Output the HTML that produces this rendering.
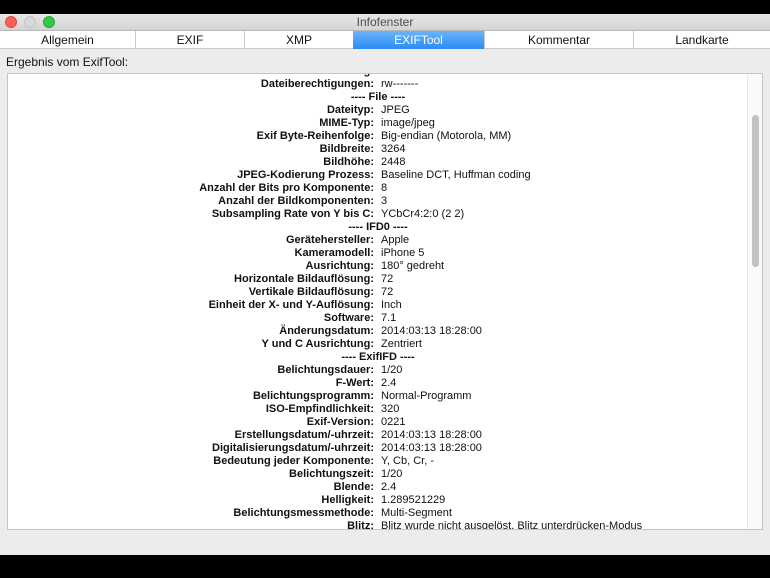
<!DOCTYPE html>
<html><head><meta charset="utf-8"><style>
*{margin:0;padding:0;box-sizing:border-box}
body{width:770px;height:578px;background:#000;font-family:"Liberation Sans",Arial,sans-serif;position:relative;overflow:hidden}
.win{position:absolute;left:0;top:14px;width:770px;height:541px;background:#ececec}
.title{position:absolute;left:0;top:0;width:770px;height:17px;background:linear-gradient(#e8e8e8,#d3d3d3);border-bottom:1px solid #b8b8b8;text-align:center;font-size:12px;line-height:17px;color:#4d4d4d}
.dot{position:absolute;top:2px;width:12px;height:12px;border-radius:50%}
.tabs{position:absolute;top:17px;left:0;width:770px;height:18px;background:#fff;border-bottom:1px solid #c8c8c8}
.tab{position:absolute;top:0;height:18px;font-size:12px;line-height:18px;text-align:center;color:#111;border-left:1px solid #c8c8c8}
.tab.sel{background:linear-gradient(#6cb3fa,#2a8cf5);color:#fff;border-left:none}
.lbl{position:absolute;left:6px;top:41px;font-size:12px;color:#111}
.box{position:absolute;left:7px;top:59px;width:756px;height:457px;background:#fff;border:1px solid #c4c4c4;overflow:hidden}
.sb{position:absolute;right:0;top:0;width:15px;height:100%;background:#fafafa;border-left:1px solid #e6e6e6}
.thumb{position:absolute;left:4px;top:41px;width:7px;height:152px;border-radius:4px;background:#c2c2c2}
.row{position:absolute;left:0;height:13px;font-size:11px;line-height:13px;color:#111;white-space:nowrap}
.k{position:absolute;font-weight:bold;text-align:right}
.v{position:absolute;left:373px}
.h{position:absolute;left:0;width:740px;text-align:center;font-weight:bold;font-size:11px;line-height:13px;color:#111}
</style></head><body>
<div class="win">
<div class="title">Infofenster
<div class="dot" style="left:5px;background:#fc5f57;border:1px solid #de4a41"></div>
<div class="dot" style="left:24px;background:#d8d8d8;border:1px solid #c4c4c4"></div>
<div class="dot" style="left:43px;background:#34c84a;border:1px solid #25a934"></div>
</div>
<div class="tabs">
<div class="tab" style="left:0;width:135px;border-left:none">Allgemein</div>
<div class="tab" style="left:135px;width:109px">EXIF</div>
<div class="tab" style="left:244px;width:109px">XMP</div>
<div class="tab sel" style="left:353px;width:131px">EXIFTool</div>
<div class="tab" style="left:484px;width:149px">Kommentar</div>
<div class="tab" style="left:633px;width:137px">Landkarte</div>
</div>
<div class="lbl">Ergebnis vom ExifTool:</div>
<div class="box" id="b">
<div class="sb"><div class="thumb"></div></div>
</div>
</div>
<script>
var d=[["Datum/Uhrzeit der letzten Inode-Änderung","2014:03:13 18:28:00+01:00"],["Dateiberechtigungen","rw-------"],["File"],["Dateityp","JPEG"],["MIME-Typ","image/jpeg"],["Exif Byte-Reihenfolge","Big-endian (Motorola, MM)"],["Bildbreite","3264"],["Bildhöhe","2448"],["JPEG-Kodierung Prozess","Baseline DCT, Huffman coding"],["Anzahl der Bits pro Komponente","8"],["Anzahl der Bildkomponenten","3"],["Subsampling Rate von Y bis C","YCbCr4:2:0 (2 2)"],["IFD0"],["Gerätehersteller","Apple"],["Kameramodell","iPhone 5"],["Ausrichtung","180° gedreht"],["Horizontale Bildauflösung","72"],["Vertikale Bildauflösung","72"],["Einheit der X- und Y-Auflösung","Inch"],["Software","7.1"],["Änderungsdatum","2014:03:13 18:28:00"],["Y und C Ausrichtung","Zentriert"],["ExifIFD"],["Belichtungsdauer","1/20"],["F-Wert","2.4"],["Belichtungsprogramm","Normal-Programm"],["ISO-Empfindlichkeit","320"],["Exif-Version","0221"],["Erstellungsdatum/-uhrzeit","2014:03:13 18:28:00"],["Digitalisierungsdatum/-uhrzeit","2014:03:13 18:28:00"],["Bedeutung jeder Komponente","Y, Cb, Cr, -"],["Belichtungszeit","1/20"],["Blende","2.4"],["Helligkeit","1.289521229"],["Belichtungsmessmethode","Multi-Segment"],["Blitz","Blitz wurde nicht ausgelöst, Blitz unterdrücken-Modus"]];
var b=document.getElementById('b'),h='';
for(var i=0;i<d.length;i++){var t=-9+i*13;
if(d[i].length==1)h+='<div class="h" style="top:'+t+'px">---- '+d[i][0]+' ----</div>';
else h+='<div class="row" style="top:'+t+'px;width:1px"><span class="k" style="left:0;transform:translateX(-100%);margin-left:366px">'+d[i][0]+':</span><span class="v">'+d[i][1]+'</span></div>';}
b.insertAdjacentHTML('afterbegin',h);
</script>
</body></html>
